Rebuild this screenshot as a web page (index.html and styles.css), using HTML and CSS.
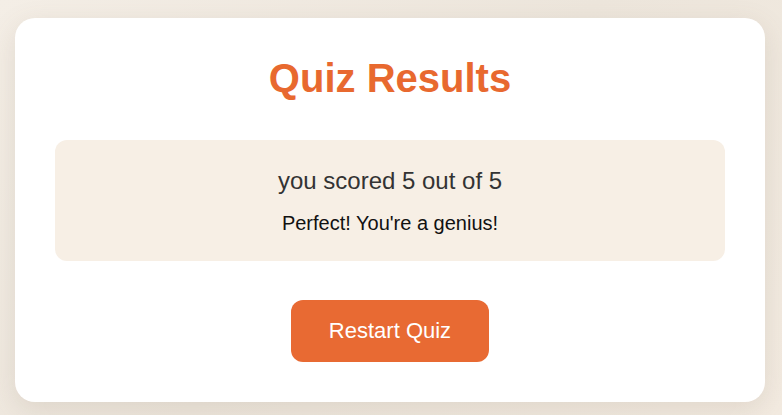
FILE: index.html
```html
<!DOCTYPE html>
<html lang="en">
<head>
<meta charset="utf-8">
<title>Quiz Results</title>
<link rel="stylesheet" href="styles.css">
</head>
<body>
  <main class="card">
    <h1 class="title">Quiz Results</h1>
    <section class="result">
      <p class="score">you scored 5 out of 5</p>
      <p class="message">Perfect! You're a genius!</p>
    </section>
    <button class="restart" type="button">Restart Quiz</button>
  </main>
</body>
</html>
```

FILE: styles.css
```css
html, body {
  margin: 0;
  height: 100%;
}
body {
  background: linear-gradient(135deg, #f4eee6 0%, #ede6dc 50%, #f3ebe1 100%);
  font-family: "Liberation Sans", Arial, sans-serif;
  padding: 18px 15px 0 15px;
  box-sizing: border-box;
  overflow: hidden;
}
.card {
  background: #ffffff;
  border-radius: 20px;
  box-shadow: 0 8px 28px rgba(120, 100, 80, 0.15);
  padding: 37px 40px 40px;
  display: flex;
  flex-direction: column;
  align-items: stretch;
  width: 750px;
  box-sizing: border-box;
}
.title {
  margin: 0 0 39px;
  text-align: center;
  color: #e8692f;
  font-size: 40px;
  font-weight: bold;
  line-height: 46px;
}
.result {
  background: #f7efe5;
  border-radius: 12px;
  padding: 27px 20px 26px;
  text-align: center;
}
.score {
  margin: 0 0 17px;
  font-size: 24px;
  line-height: 28px;
  color: #333333;
}
.message {
  margin: 0;
  font-size: 20px;
  line-height: 23px;
  color: #111111;
}
.restart {
  align-self: center;
  margin-top: 39px;
  width: 198px;
  height: 62px;
  border: none;
  border-radius: 12px;
  background: #e86a33;
  color: #ffffff;
  font-family: "Liberation Sans", Arial, sans-serif;
  font-size: 22px;
  cursor: pointer;
}
```
